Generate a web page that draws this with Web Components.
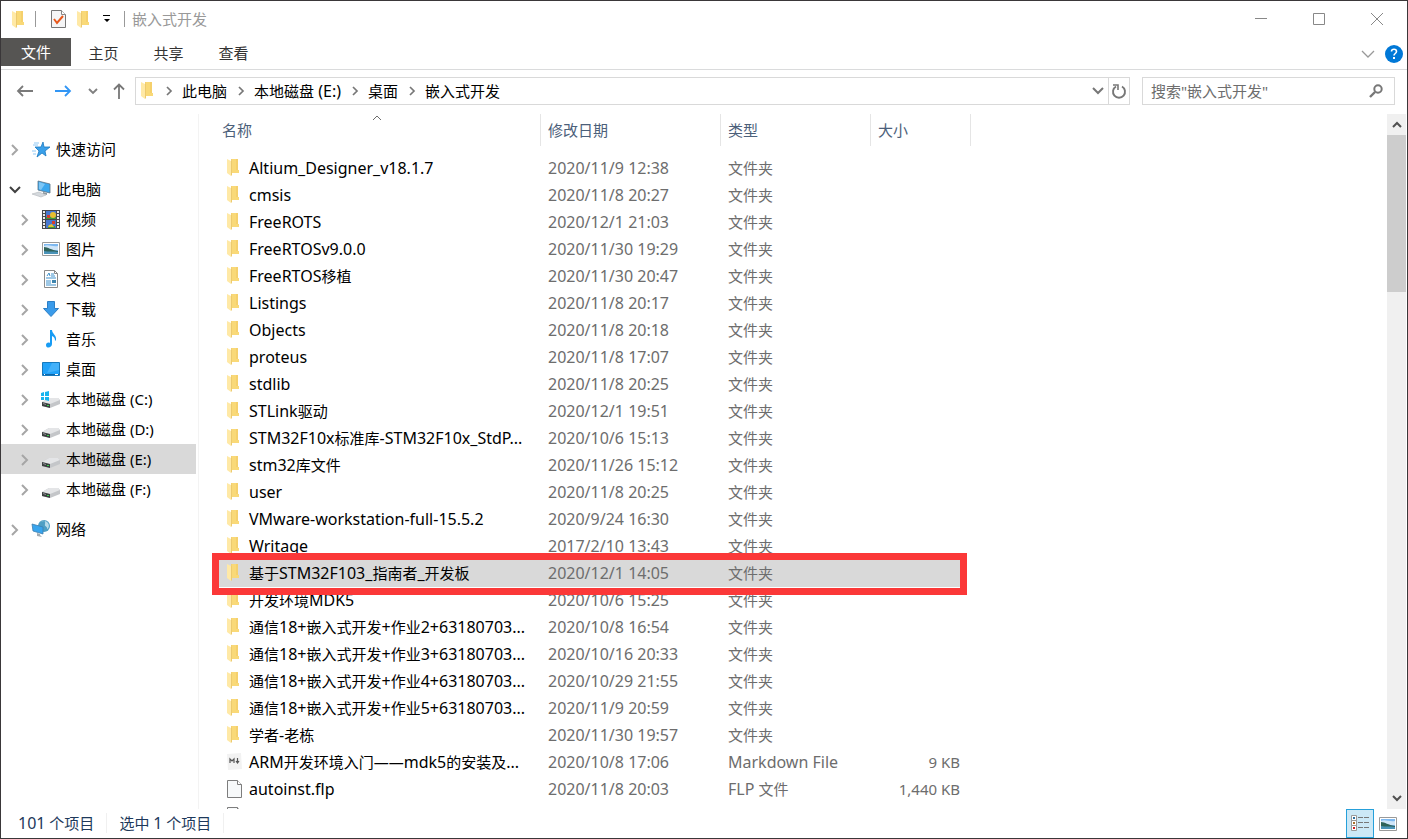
<!DOCTYPE html>
<html lang="zh-CN">
<head>
<meta charset="utf-8">
<title>嵌入式开发</title>
<style>
    html, body { height: 100%; margin: 0; }
    body {
        font-family: "Noto Sans", "Noto Sans CJK SC", sans-serif;
        font-size: 15px;
        line-height: 20px;
        color: #000;
        background: #fff;
    }
</style>
</head>
<body>
<explorer-window></explorer-window>

<script>
const FOLDER = `<path d="M4 0h7v13H4z" fill="#f3cf74"/><path d="M5 0h6v11h1v3H5z" fill="#f9d978"/><path d="M9 0h2v11H9z" fill="#f5d06c"/><path d="M0 0l4 2v15l-4-3z" fill="#ffe9a6"/><path d="M4 2v15l1-1V2z" fill="#ecca70"/>`;
const DRIVE = `<path d="M0 12l7-4h9l2 2v4l-10 4-8-2z" fill="#c4c6c9"/><path d="M0 12l7-4h9l2 2-10 4z" fill="#e4e5e7"/><path d="M0 12l8 2v4l-8-2z" fill="#3c3f41"/><path d="M1 13l3 1v1l-3-1z" fill="#8b9093"/><path d="M5 15h2v1H5z" fill="#35d04a"/>`;
const PICTURE = `<path d="M.5 2.500h17v13H.5z" fill="#fff" stroke="#9a9a9a"/><path d="M2 4h14v10H2z" fill="#7db8f0"/><path d="M2 6c4-2 8 1 14 0v4H2z" fill="#cfe5f8"/><path d="M2 7c4 0 7 3 14 4v1H2z" fill="#2f6259"/><path d="M2 11c5 1 9 0 14 1v2H2z" fill="#4a93b8"/>`;

// name: [width, height, markup]
const ICONS = {
    folder: [14, 17, FOLDER],
    check: [15, 18, `<path d="M.5.5h10l4 4v13H.5z" fill="#f5f5f6" stroke="#777"/><path d="M10.500.5v4h4" fill="#fff" stroke="#888"/><path d="M3 9l3 4 6-7" fill="none" stroke="#e8581c" stroke-width="2"/>`],
    customize: [8, 8, `<path d="M0 0h7v1H0zM1 4h6L4 7z" fill="#000"/>`],
    minimize: [12, 12, `<path d="M0 5.500h12" stroke="#888"/>`],
    maximize: [12, 12, `<path d="M.5.5h11v11H.5z" fill="none" stroke="#888"/>`],
    close: [12, 12, `<path d="M0 0l12 12M12 0L0 12" stroke="#888" fill="none"/>`],
    collapse: [14, 8, `<path d="M1 1l6 6 6-6" fill="none" stroke="#999" stroke-width="1.300"/>`],
    help: [18, 18, `<circle cx="9" cy="9" r="9" fill="#0078d7"/><path d="M6.500 6.500c0-3 5-3 5 0 0 2-2.500 2-2.500 4" fill="none" stroke="#fff" stroke-width="1.600"/><path d="M8 12h2v2H8z" fill="#fff"/>`],
    back: [16, 12, `<path d="M16 6H1M6 1L1 6l5 5" fill="none" stroke="#7a7a7a" stroke-width="1.800"/>`],
    forward: [16, 12, `<path d="M0 6h15M10 1l5 5-5 5" fill="none" stroke="#3296f5" stroke-width="1.800"/>`],
    up: [12, 16, `<path d="M6 16V1M1 6.500L6 1.500l5 5" fill="none" stroke="#777" stroke-width="1.800"/>`],
    recent: [10, 6, `<path d="M1 1l4 4 4-4" fill="none" stroke="#808080" stroke-width="1.900"/>`],
    dropdown: [12, 8, `<path d="M1 1l5 5 5-5" fill="none" stroke="#777" stroke-width="2"/>`],
    crumb: [6, 10, `<path d="M1 1l4 4-4 4" fill="none" stroke="#777" stroke-width="1.700"/>`],
    refresh: [14, 14, `<path d="M4 2.500A6 6 0 1 0 10 2.500" fill="none" stroke="#777" stroke-width="1.900"/><path d="M1 1h5v5" fill="none" stroke="#777" stroke-width="1.600"/>`],
    search: [14, 14, `<circle cx="9" cy="5" r="3.700" fill="none" stroke="#777" stroke-width="2"/><path d="M6 8l-5 5" stroke="#777" stroke-width="2.400"/>`],
    sort: [10, 6, `<path d="M1 5l4-4 4 4" fill="none" stroke="#6d6d6d"/>`],
    closed: [8, 12, `<path d="M1 1l5 5-5 5" fill="none" stroke="#a6a6a6" stroke-width="2"/>`],
    open: [12, 8, `<path d="M1 1l5 5 5-5" fill="none" stroke="#404040" stroke-width="2"/>`],
    scrollup: [10, 7, `<path d="M1 6l4-4 4 4" fill="none" stroke="#505050" stroke-width="2"/>`],
    scrolldown: [10, 7, `<path d="M1 1l4 4 4-4" fill="none" stroke="#505050" stroke-width="2"/>`],
    star: [18, 18, `<path d="M11 2l1 5 6 0-5 4 1 5-4-3-5 4 2-6-4-4h6z" fill="#3aa0ea" stroke="#1b78c0" stroke-width=".8"/><path d="M2 3h5M1 5h5M0 11h4M1 14h3" stroke="#8fc8f5"/>`],
    computer: [18, 18, `<path d="M6 1l12 3v9L6 10z" fill="#3ba7ee" stroke="#5a7184" stroke-width=".8"/><path d="M7 2l6 2-4 6-2-1z" fill="#7cc6f6"/><path d="M11 12l4 1v2l-4-1z" fill="#8e989f"/><path d="M0 14l7-2 7 3-5 2z" fill="#d5d9dd" stroke="#b2b7bc" stroke-width=".6"/>`],
    video: [18, 19, `<path d="M0 0h18v19H0z" fill="#45484c"/><path d="M1 1h2v2H1zM1 4h2v2H1zM1 7h2v2H1zM1 10h2v2H1zM1 13h2v2H1zM1 16h2v2H1zM15 1h2v2h-2zM15 4h2v2h-2zM15 7h2v2h-2zM15 10h2v2h-2zM15 13h2v2h-2zM15 16h2v2h-2z" fill="#eee"/><path d="M4 1h10v8H4zM4 10h10v8H4z" fill="#4778d0"/><path d="M4 7h10v2H4zM6 16h7v2H6z" fill="#3f9a3b"/><circle cx="11" cy="5" r="3" fill="#e6bf2e"/><path d="M5 5h3v3H5zM10 11h3v3h-3z" fill="#d73c2c"/><path d="M7 15l3-1 2 3H6z" fill="#e6bf2e"/>`],
    picture: [18, 18, PICTURE],
    document: [18, 18, `<path d="M2.500.5h10l3 3v14h-13z" fill="#fff" stroke="#8a8a8a"/><path d="M12.500.5v3h3" fill="none" stroke="#8a8a8a"/><path d="M5 6l2-3 1 3M9 4h3M9 6h4M4 8h10M4 11h5M4 13h5M4 15h10" fill="none" stroke="#3e91cc"/><path d="M10 10h4v3h-4z" fill="#3f85ae"/>`],
    download: [18, 18, `<path d="M5.500 1.500h7v7h4l-7.500 8-7.500-8h4z" fill="#3a9bea" stroke="#2c7fc6"/>`],
    music: [18, 18, `<path d="M8 0h2c0 4 5 5 4 10l-1 1c0-3-1-4-3-5v8c0 4-6 5-6 1 0-2 2-3 4-2z" fill="#189cf4"/>`],
    desktop: [18, 18, `<path d="M.5 2.500h17v13H.5z" fill="#22a2f8" stroke="#1679bd"/><path d="M10 3h7v7L5 13z" fill="#43b1fa"/><path d="M1 14h16v1H1z" fill="#0e66a8"/><path d="M2 14h1v1H2zM13 14h3v1h-3z" fill="#fff"/>`],
    system: [18, 18, DRIVE + `<path d="M-1 3l3-1v4h-3zM3 2l4-1v5H3zM-1 7h3v3h-3zM3 7h4v4l-4-1z" fill="#17b4ee"/>`],
    drive: [18, 18, DRIVE],
    network: [18, 18, `<circle cx="12" cy="6" r="6" fill="#4e9fc4"/><path d="M8 3c3-4 6-2 5 1s3 2 2 5c2 0 3-5 0-7-2-2-6-1-7 1z" fill="#b9dbe9"/><path d="M0 4l11 3v7L1 11z" fill="#38a5ee" stroke="#3c7eaf" stroke-width=".8"/><path d="M5 13l3 1v1l2 2-5-1z" fill="#a1abb2"/>`],
    markdown: [15, 17, `<path d="M0 1l14-1 1 16-14 1z" fill="#f2f2f2"/><path d="M3 10V6l2 2 2-2v4M10.500 5v4M9 8l1.500 2L12 8" fill="none" stroke="#555" stroke-width="1.200"/>`],
    file: [15, 18, `<path d="M.5.5h10l4 4v13H.5z" fill="#f7f9fa" stroke="#7d7d7d"/><path d="M10.500.5v4h4" fill="#fff" stroke="#7d7d7d"/>`],
    details: [18, 17, `<path d="M.5.5h5v5h-5zM.5 5.500h5v5h-5zM.5 10.500h5v5h-5z" fill="#fff" stroke="#999"/><path d="M2 2h2v2H2z" fill="#2c6f9f"/><path d="M2 7h2v2H2z" fill="#a8702c"/><path d="M2 12h2v2H2z" fill="#d02020"/><path d="M7 2.500h5M13 2.500h5M7 7.500h5M13 7.500h5M7 12.500h5M13 12.500h5" stroke="#777"/>`],
    thumbs: [18, 18, PICTURE]
};

// Chinese runs keep the base size, everything else is set one pixel larger
function mixed(text) {
    return text.replace(/[^\u3000-\u9fff—]+/g, (run) => `<span class="latin">${run}</span>`);
}

function define(name, html, setup) {
    const template = document.createElement("template");
    template.innerHTML = html;
    customElements.define(name, class extends HTMLElement {
        constructor() {
            super();
            this.attachShadow({ mode: "open" });
            this.shadowRoot.appendChild(template.content.cloneNode(true));
        }

        connectedCallback() {
            if (setup) setup(this, this.shadowRoot);
        }
    });
}

define("ex-icon", `
    <style>
        :host { display: inline-flex; flex: none; }
        svg { display: block; overflow: visible; }
    </style>
    <svg aria-hidden="true"></svg>
`, (host, root) => {
    const [width, height, markup] = ICONS[host.getAttribute("name")];
    const svg = root.querySelector("svg");
    svg.setAttribute("width", width);
    svg.setAttribute("height", height);
    svg.innerHTML = markup;
});

const BUTTON = `
    button {
        display: flex;
        align-items: center;
        justify-content: center;
        padding: 0;
        border: 0;
        background: none;
        font: inherit;
        color: inherit;
    }
    .latin { font-size: 16px; }
`;

define("title-bar", `
    <style>
        ${BUTTON}
        :host { display: flex; height: 36px; padding-bottom: 1px; align-items: center; }
        .quick { display: flex; flex: 1; align-items: center; padding-left: 11px; }
        .quick button { width: 20px; height: 24px; }
        .create { margin-left: 6px; }
        i { width: 1px; height: 16px; background: #999; }
        .sep { margin: 0 12px 0 9px; }
        .menu { margin: 0 7px 0 3px; }
        .title { margin-left: 7px; color: #999; }
        .window { display: flex; padding-right: 1px; }
        .window button { width: 58px; height: 36px; }
    </style>
    <div class="quick">
        <ex-icon name="folder"></ex-icon>
        <i class="sep"></i>
        <button aria-label="属性"><ex-icon name="check"></ex-icon></button>
        <button class="create" aria-label="新建文件夹"><ex-icon name="folder"></ex-icon></button>
        <button class="menu" aria-label="自定义"><ex-icon name="customize"></ex-icon></button>
        <i></i>
        <span class="title">嵌入式开发</span>
    </div>
    <div class="window">
        <button aria-label="最小化"><ex-icon name="minimize"></ex-icon></button>
        <button aria-label="最大化"><ex-icon name="maximize"></ex-icon></button>
        <button aria-label="关闭"><ex-icon name="close"></ex-icon></button>
    </div>
`);

define("ribbon-tabs", `
    <style>
        ${BUTTON}
        :host { display: flex; height: 31px; border-bottom: 1px solid #dadbdc; color: #333; }
        button { width: 65px; height: 30px; }
        .file { width: 70px; height: 28px; background: #565553; color: #fff; }
        .right { display: flex; margin-left: auto; padding-right: 4px; gap: 10px; align-items: center; }
        .right button { width: auto; }
    </style>
    <button class="file">文件</button>
    <button>主页</button>
    <button>共享</button>
    <button>查看</button>
    <div class="right">
        <button aria-label="展开功能区"><ex-icon name="collapse"></ex-icon></button>
        <button aria-label="帮助"><ex-icon name="help"></ex-icon></button>
    </div>
`);

define("address-bar", `
    <style>
        ${BUTTON}
        :host { display: flex; padding: 7px 12px 9px 16px; }
        .moves { display: flex; gap: 22px; align-items: center; margin-right: 10px; }
        .moves .near { margin: 0 -7px 0 -5px; }
        .path, .search {
            display: flex;
            box-sizing: border-box;
            height: 28px;
            border: 1px solid #d9d9d9;
            align-items: center;
        }
        .path { flex: 1; padding-left: 5px; }
        nav { display: flex; flex: 1; align-items: center; padding-bottom: 1px; }
        nav ex-icon { margin: 0 10px 0 11px; }
        nav ex-icon:first-child { margin: 0; }
        a { color: #000; text-decoration: none; }
        .path button { width: 20px; height: 26px; }
        .path .refresh { width: 21px; border-left: 1px solid #d9d9d9; }
        .search { width: 253px; margin-left: 12px; padding: 0 11px 0 8px; }
        input {
            flex: 1;
            min-width: 0;
            padding: 0;
            border: 0;
            outline: 0;
            background: none;
            font: inherit;
        }
        input::placeholder { color: #6d6d6d; opacity: 1; }
    </style>
    <div class="moves">
        <button aria-label="后退"><ex-icon name="back"></ex-icon></button>
        <button aria-label="前进"><ex-icon name="forward"></ex-icon></button>
        <button class="near" aria-label="最近浏览的位置"><ex-icon name="recent"></ex-icon></button>
        <button aria-label="上移"><ex-icon name="up"></ex-icon></button>
    </div>
    <div class="path">
        <nav>
            <ex-icon name="folder"></ex-icon>
            <ex-icon name="crumb"></ex-icon><a href="#pc">此电脑</a>
            <ex-icon name="crumb"></ex-icon><a href="#e">本地磁盘 (E:)</a>
            <ex-icon name="crumb"></ex-icon><a href="#desktop">桌面</a>
            <ex-icon name="crumb"></ex-icon><a href="#dev">嵌入式开发</a>
        </nav>
        <button aria-label="以前的位置"><ex-icon name="dropdown"></ex-icon></button>
        <button class="refresh" aria-label="刷新"><ex-icon name="refresh"></ex-icon></button>
    </div>
    <label class="search">
        <input type="text" aria-label="搜索" placeholder='搜索"嵌入式开发"'>
        <ex-icon name="search"></ex-icon>
    </label>
`, (host, root) => {
    for (const link of root.querySelectorAll("a")) {
        link.innerHTML = mixed(link.textContent);
    }
});

define("nav-item", `
    <style>
        :host { display: flex; height: 30px; align-items: center; padding-left: 8px; }
        :host([sub]) { padding-left: 18px; }
        :host([selected]) { background: #d9d9d9; }
        :host([gap]) { margin-bottom: 10px; }
        .arrow { display: flex; width: 12px; padding-top: 2px; justify-content: center; margin-right: 11px; }
        a { display: flex; align-items: center; gap: 6px; color: #000; text-decoration: none; }
    </style>
    <span class="arrow"></span>
    <a href="#"><slot name="icon"></slot><span><slot></slot></span></a>
`, (host, root) => {
    const state = host.hasAttribute("open") ? "open" : "closed";
    root.querySelector(".arrow").innerHTML = `<ex-icon name="${state}"></ex-icon>`;
});

define("nav-tree", `
    <style>
        :host { display: block; box-sizing: border-box; width: 198px; padding: 20px 2px 0 0; border-right: 1px solid #f3f3f3; }
    </style>
    <nav>
        <nav-item gap><ex-icon slot="icon" name="star"></ex-icon>快速访问</nav-item>
        <nav-item open><ex-icon slot="icon" name="computer"></ex-icon>此电脑</nav-item>
        <nav-item sub><ex-icon slot="icon" name="video"></ex-icon>视频</nav-item>
        <nav-item sub><ex-icon slot="icon" name="picture"></ex-icon>图片</nav-item>
        <nav-item sub><ex-icon slot="icon" name="document"></ex-icon>文档</nav-item>
        <nav-item sub><ex-icon slot="icon" name="download"></ex-icon>下载</nav-item>
        <nav-item sub><ex-icon slot="icon" name="music"></ex-icon>音乐</nav-item>
        <nav-item sub><ex-icon slot="icon" name="desktop"></ex-icon>桌面</nav-item>
        <nav-item sub><ex-icon slot="icon" name="system"></ex-icon>本地磁盘 (C:)</nav-item>
        <nav-item sub><ex-icon slot="icon" name="drive"></ex-icon>本地磁盘 (D:)</nav-item>
        <nav-item sub selected><ex-icon slot="icon" name="drive"></ex-icon>本地磁盘 (E:)</nav-item>
        <nav-item sub gap><ex-icon slot="icon" name="drive"></ex-icon>本地磁盘 (F:)</nav-item>
        <nav-item><ex-icon slot="icon" name="network"></ex-icon>网络</nav-item>
    </nav>
`);

const FILES = [
    ["Altium_Designer_v18.1.7", "2020/11/9 12:38"],
    ["cmsis", "2020/11/8 20:27"],
    ["FreeROTS", "2020/12/1 21:03"],
    ["FreeRTOSv9.0.0", "2020/11/30 19:29"],
    ["FreeRTOS移植", "2020/11/30 20:47"],
    ["Listings", "2020/11/8 20:17"],
    ["Objects", "2020/11/8 20:18"],
    ["proteus", "2020/11/8 17:07"],
    ["stdlib", "2020/11/8 20:25"],
    ["STLink驱动", "2020/12/1 19:51"],
    ["STM32F10x标准库-STM32F10x_StdP...", "2020/10/6 15:13"],
    ["stm32库文件", "2020/11/26 15:12"],
    ["user", "2020/11/8 20:25"],
    ["VMware-workstation-full-15.5.2", "2020/9/24 16:30"],
    ["Writage", "2017/2/10 13:43"],
    ["基于STM32F103_指南者_开发板", "2020/12/1 14:05"],
    ["开发环境MDK5", "2020/10/6 15:25"],
    ["通信18+嵌入式开发+作业2+63180703...", "2020/10/8 16:54"],
    ["通信18+嵌入式开发+作业3+63180703...", "2020/10/16 20:33"],
    ["通信18+嵌入式开发+作业4+63180703...", "2020/10/29 21:55"],
    ["通信18+嵌入式开发+作业5+63180703...", "2020/11/9 20:59"],
    ["学者-老栋", "2020/11/30 19:57"],
    ["ARM开发环境入门——mdk5的安装及...", "2020/10/8 17:06", "Markdown File", "9 KB", "markdown"],
    ["autoinst.flp", "2020/11/8 20:03", "FLP 文件", "1,440 KB", "file"],
    ["", "", "", "", "file"]
];
const SELECTED = 15;

define("file-list", `
    <style>
        :host { display: block; flex: 1; min-width: 0; overflow: hidden; padding-left: 20px; }
        table, thead, tbody { display: block; }
        tr { display: grid; grid-template-columns: 321px 180px 150px 90px; width: 741px; height: 27px; }
        thead tr { grid-template-columns: 322px 180px 150px 100px; width: 752px; height: 32px; margin-bottom: 9px; }
        th, td { display: flex; align-items: center; padding: 0 0 2px 8px; white-space: nowrap; }
        th { position: relative; border-right: 1px solid #e5e5e5; padding: 0 0 0 7px; font-weight: 400; color: #4c607a; }
        th:first-child { padding-left: 3px; }
        th ex-icon { position: absolute; top: 1px; left: 153px; }
        td { color: #6d6d6d; }
        td:first-child { gap: 7px; color: #000; }
        td:first-child ex-icon { width: 15px; }
        td:last-child { justify-content: flex-end; padding: 0 0 2px; }
        .latin { font-size: 16px; }
        .selected { position: relative; background: #d9d9d9; }
        .selected::after {
            content: "";
            position: absolute;
            inset: -7px -7px -8px;
            border: 7px solid #fb3838;
        }
    </style>
    <table>
        <thead>
            <tr><th>名称<ex-icon name="sort"></ex-icon></th><th>修改日期</th><th>类型</th><th>大小</th></tr>
        </thead>
        <tbody></tbody>
    </table>
`, (host, root) => {
    root.querySelector("tbody").innerHTML = FILES.map(([name, date, type = "文件夹", size = "", icon = "folder"], i) => `
        <tr class="${i === SELECTED ? "selected" : ""}">
            <td><ex-icon name="${icon}"></ex-icon><span>${mixed(name)}</span></td>
            <td><span>${mixed(date)}</span></td>
            <td><span>${mixed(type)}</span></td>
            <td>${size}</td>
        </tr>`).join("");
});

define("scroll-bar", `
    <style>
        ${BUTTON}
        :host { display: flex; flex-direction: column; width: 19px; margin-right: 1px; background: #f0f0f0; }
        button { height: 21px; }
        .track { flex: 1; }
        .thumb { height: 24%; background: #cdcdcd; }
    </style>
    <button aria-label="向上"><ex-icon name="scrollup"></ex-icon></button>
    <div class="track"><div class="thumb"></div></div>
    <button aria-label="向下"><ex-icon name="scrolldown"></ex-icon></button>
`);

define("status-bar", `
    <style>
        ${BUTTON}
        :host { display: flex; height: 29px; align-items: center; padding: 0 5px 0 17px; color: #1e395b; }
        span { padding: 0 12px 0 0; margin: 0 12px 2px 0; border-right: 1px solid #f0f0f0; }
        .views { display: flex; margin-left: auto; }
        button { box-sizing: border-box; width: 28px; height: 29px; }
        .on { border: 1px solid #26a0da; background: #cce8f6; }
    </style>
    <span>101 个项目</span>
    <span>选中 1 个项目</span>
    <div class="views">
        <button class="on" aria-label="详细信息"><ex-icon name="details"></ex-icon></button>
        <button aria-label="大缩略图"><ex-icon name="thumbs"></ex-icon></button>
    </div>
`, (host, root) => {
    for (const part of root.querySelectorAll("span")) {
        part.innerHTML = part.textContent.replace(/\d+/, (n) => `<b class="latin" style="font-weight: 400">${n}</b>`);
    }
});

define("explorer-window", `
    <style>
        :host {
            display: flex;
            flex-direction: column;
            box-sizing: border-box;
            height: 100vh;
            border: 1px solid #3a3739;
            background: #fff;
        }
        main { display: flex; flex: 1; min-height: 0; }
    </style>
    <title-bar></title-bar>
    <ribbon-tabs></ribbon-tabs>
    <address-bar></address-bar>
    <main>
        <nav-tree></nav-tree>
        <file-list></file-list>
        <scroll-bar></scroll-bar>
    </main>
    <status-bar></status-bar>
`);
</script>
</body>
</html>
